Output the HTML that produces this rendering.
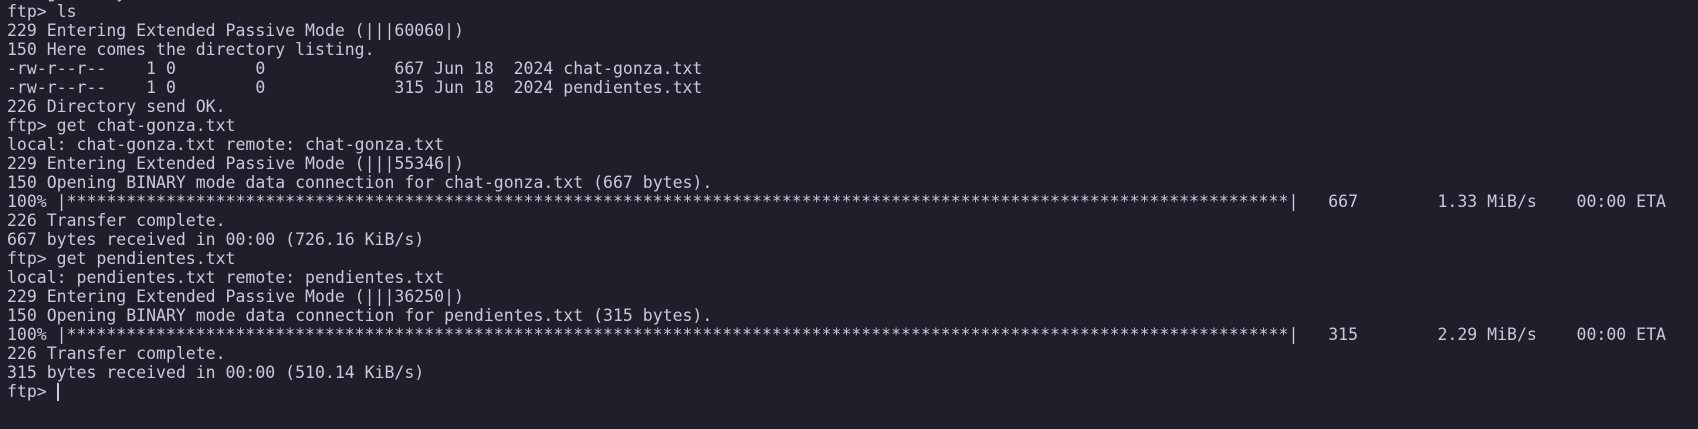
<!DOCTYPE html>
<html><head><meta charset="utf-8"><style>
html,body{margin:0;padding:0;background:#1f1f2b;width:1698px;height:429px;overflow:hidden}
pre{margin:0;position:absolute;left:7px;top:-17px;font-family:"DejaVu Sans Mono","Liberation Mono",monospace;font-size:16.5px;line-height:19px;color:#c9c9dc;white-space:pre}
.cur{display:inline-block;width:2px;height:18px;background:#c9c9dc;vertical-align:-4px}
</style></head><body>
<pre>Using binary mode to transfer files.
ftp&gt; ls
229 Entering Extended Passive Mode (|||60060|)
150 Here comes the directory listing.
-rw-r--r--    1 0        0             667 Jun 18  2024 chat-gonza.txt
-rw-r--r--    1 0        0             315 Jun 18  2024 pendientes.txt
226 Directory send OK.
ftp&gt; get chat-gonza.txt
local: chat-gonza.txt remote: chat-gonza.txt
229 Entering Extended Passive Mode (|||55346|)
150 Opening BINARY mode data connection for chat-gonza.txt (667 bytes).
100% |***************************************************************************************************************************|   667        1.33 MiB/s    00:00 ETA
226 Transfer complete.
667 bytes received in 00:00 (726.16 KiB/s)
ftp&gt; get pendientes.txt
local: pendientes.txt remote: pendientes.txt
229 Entering Extended Passive Mode (|||36250|)
150 Opening BINARY mode data connection for pendientes.txt (315 bytes).
100% |***************************************************************************************************************************|   315        2.29 MiB/s    00:00 ETA
226 Transfer complete.
315 bytes received in 00:00 (510.14 KiB/s)
ftp&gt; <span class="cur"></span></pre>
</body></html>
